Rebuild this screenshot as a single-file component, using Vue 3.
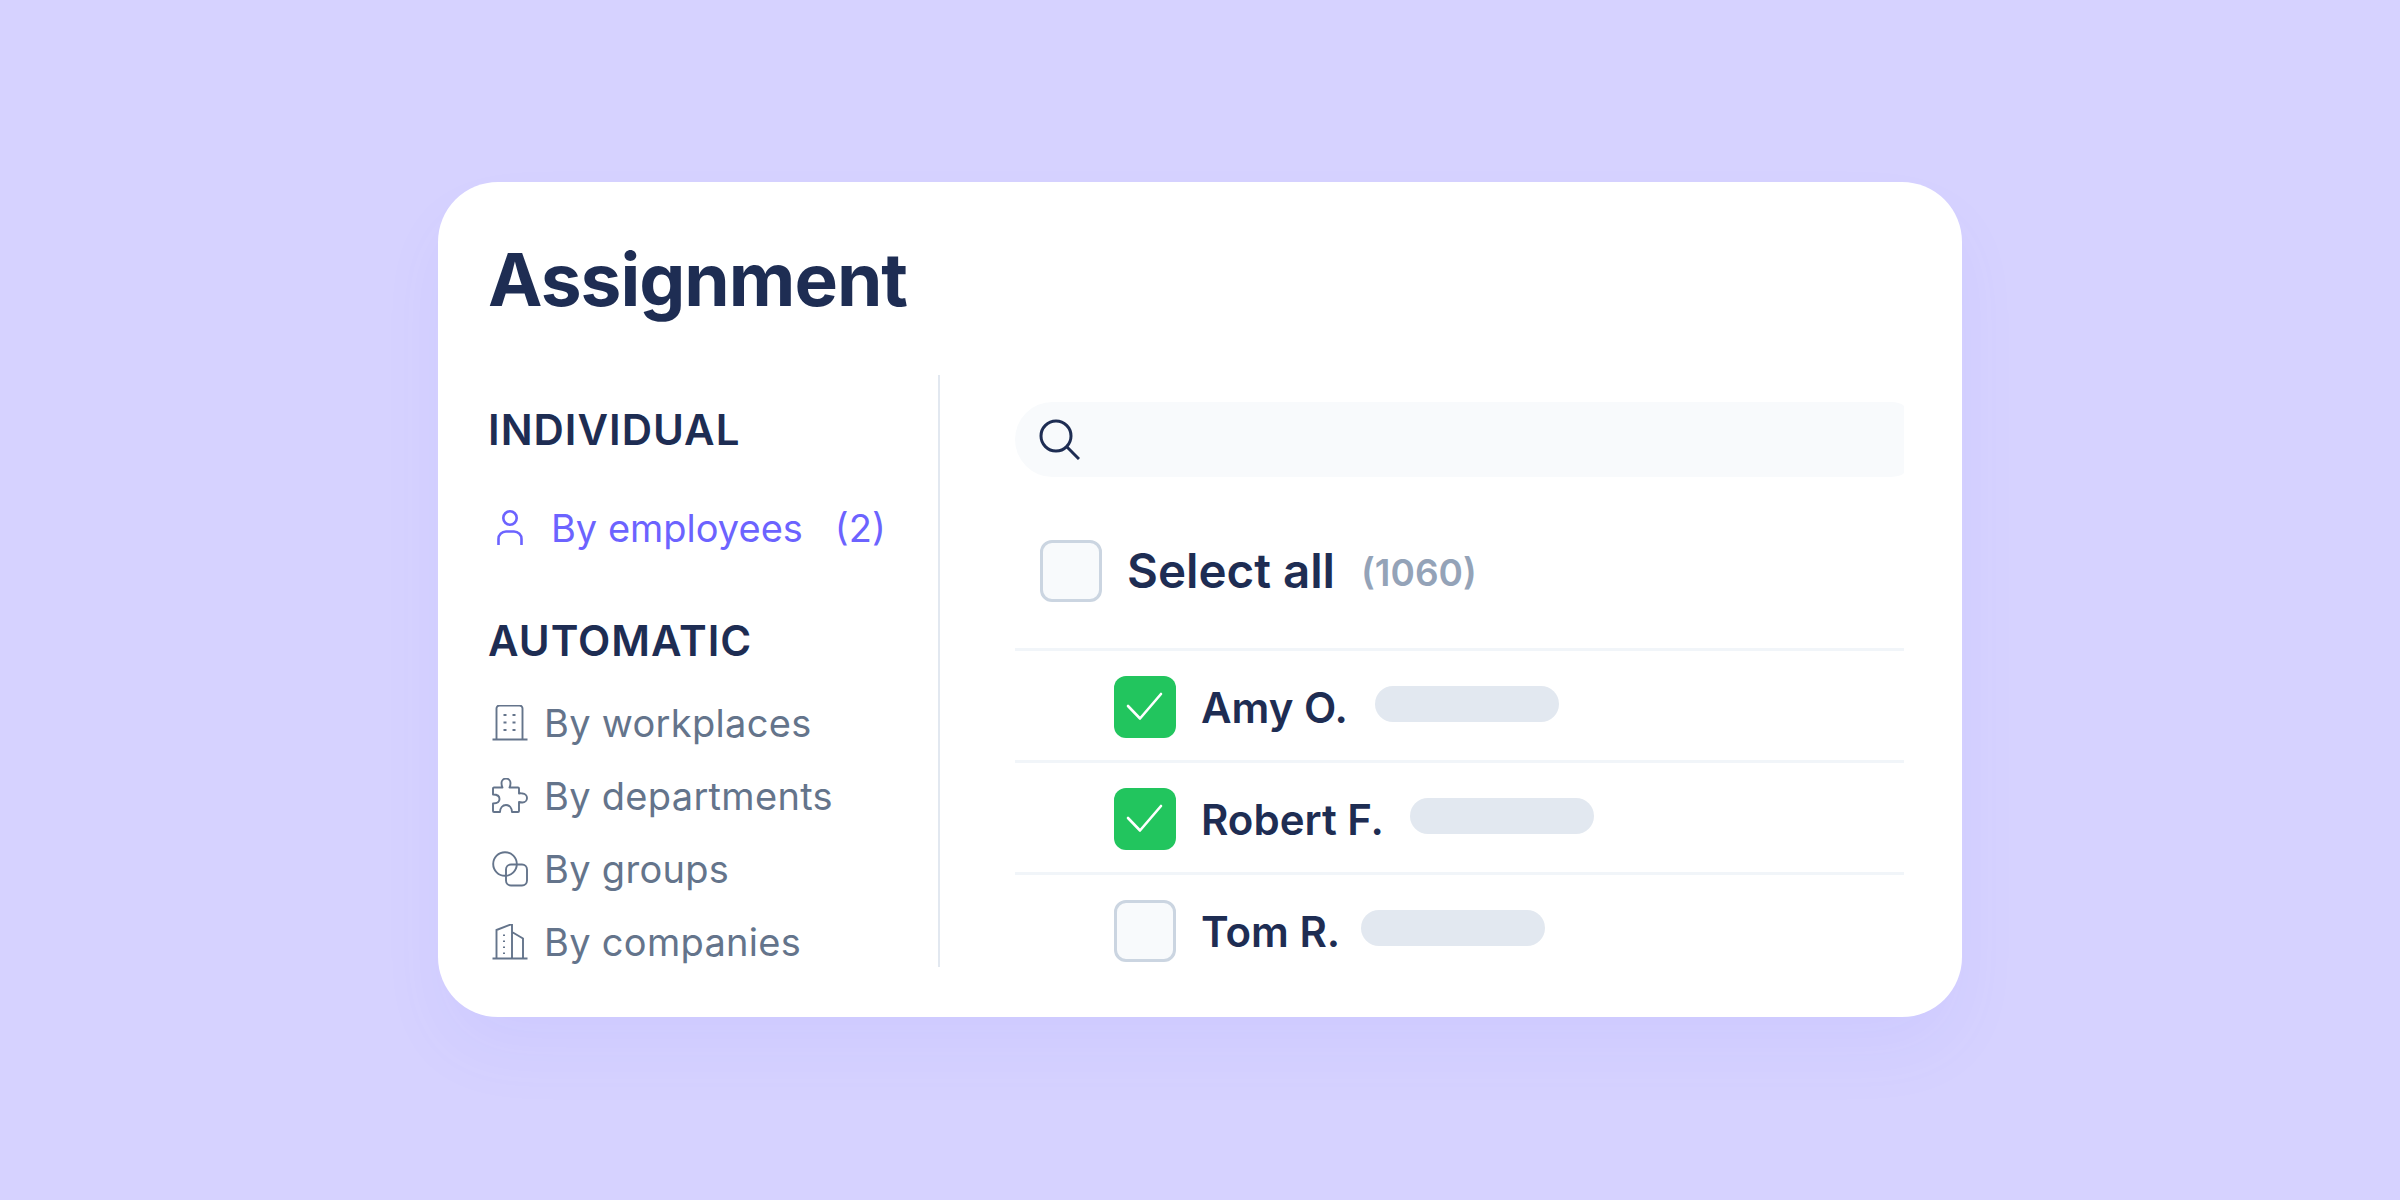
<template>
  <div class="page">
    <div class="card">
      <h1 class="title">Assignment</h1>
      <div class="body">
        <div class="side">
          <div class="side-head">INDIVIDUAL</div>
          <div class="by-employees">
            <svg class="person" viewBox="0 0 26 36" fill="none" stroke="#6c63ff" stroke-width="2.6">
              <circle cx="13" cy="8" r="6.7" />
              <path d="M1.5 35V29a7.5 7.5 0 0 1 7.5-7.5h8a7.5 7.5 0 0 1 7.5 7.5v6" />
            </svg>
            <span class="emp-text">By employees</span>
            <span class="emp-count">(2)</span>
          </div>
          <div class="side-head auto">AUTOMATIC</div>
          <div class="side-list">
            <div class="side-item">
              <svg class="ico" viewBox="0 0 36 36" fill="none" stroke="#64748b" stroke-width="1.9">
                <path d="M4.500 34.500V3.500a3 3 0 0 1 3-3h20a3 3 0 0 1 3 3v31M0.500 34.500h35" />
                <path d="M11.500 10h3M20.500 10h3M11.500 17.500h3M20.500 17.500h3M11.500 25h3M20.500 25h3" />
              </svg>
              <span>By workplaces</span>
            </div>
            <div class="side-item">
              <svg class="ico" viewBox="0 0 36 36" fill="none" stroke="#64748b" stroke-width="1.9" stroke-linejoin="round">
                <path d="M2 9.500H10.500C9.500 8 9.500 6.500 9.500 5a4.500 4.500 0 0 1 9 0C18.500 6.500 18.500 8 17.500 9.500H26a1 1 0 0 1 1 1V15.500C28.500 15 29.500 15.500 30.500 15.500a4.500 4.500 0 0 1 0 9C29.500 24.500 28.500 24.500 27 24V33a1 1 0 0 1-1 1H20C20 30 17.500 27 14 27S8 30 8 34H2a1 1 0 0 1-1-1V25.500C4.500 25.500 7.500 24 7.500 21S4.500 16.500 1 16.500V10.500a1 1 0 0 1 1-1z" />
              </svg>
              <span>By departments</span>
            </div>
            <div class="side-item">
              <svg class="ico" viewBox="0 0 36 36" fill="none" stroke="#64748b" stroke-width="1.9">
                <circle cx="13" cy="13" r="11.800" />
                <rect x="14" y="13.500" width="21" height="21" rx="5" />
              </svg>
              <span>By groups</span>
            </div>
            <div class="side-item">
              <svg class="ico" viewBox="0 0 36 36" fill="none" stroke="#64748b" stroke-width="1.9">
                <path d="M4.500 34.500V6L20 0v34.500M20 8l11 6.500v20M0.500 34.500h35" />
                <path d="M12 10.500v1.500M12 16.500v1.500M12 22.500v1.500M12 28.500v1.500" stroke-width="2" />
              </svg>
              <span>By companies</span>
            </div>
          </div>
        </div>
        <div class="main">
          <div class="search">
            <svg class="search-ico" viewBox="0 0 41 41" fill="none" stroke="#1e2d53" stroke-width="3">
              <circle cx="17" cy="17" r="15" />
              <path d="M28 28l12 12" />
            </svg>
          </div>
          <div class="select-all">
            <span class="box"></span>
            <span class="select-text">Select all</span>
            <span class="select-count">(1060)</span>
          </div>
          <div v-for="p in people" :key="p.name" class="row">
            <span class="box" :class="{ on: p.checked }">
              <svg v-if="p.checked" viewBox="0 0 62 62" fill="none" stroke="#fff" stroke-width="2.600" stroke-linecap="round" stroke-linejoin="round">
                <path d="M14 30l12 12.500L47 18" />
              </svg>
            </span>
            <span class="name">{{ p.name }}</span>
            <span class="pill" :style="{ marginLeft: p.gap + 'px' }"></span>
          </div>
        </div>
      </div>
    </div>
  </div>
</template>

<script setup>
const people = [
  { name: 'Amy O.', checked: true, gap: 27 },
  { name: 'Robert F.', checked: true, gap: 26 },
  { name: 'Tom R.', checked: false, gap: 21 }
]
</script>

<style>
body {
  background: #d6d2ff;
}
</style>

<style scoped>
.page {
  box-sizing: border-box;
  height: 1200px;
  padding-top: 182px;
  display: flex;
  justify-content: center;
  background: #d6d2ff;
  font-family: Inter, "Liberation Sans", sans-serif;
}
.card {
  box-sizing: border-box;
  width: 1524px;
  height: 835px;
  padding: 50px 58px 50px 50px;
  background: #fff;
  border-radius: 60px;
  box-shadow: 0 36px 70px -10px rgba(108, 99, 255, 0.08);
  display: flex;
  flex-direction: column;
}
.title {
  margin: 0;
  flex: none;
  height: 143px;
  padding-top: 4px;
  box-sizing: border-box;
  font-size: 73px;
  line-height: 88px;
  font-weight: 700;
  color: #1e2d53;
  letter-spacing: -1px;
}
.body {
  flex: 1;
  min-height: 0;
  display: flex;
}
.side {
  box-sizing: border-box;
  width: 452px;
  border-right: 2px solid #e2e8f0;
  padding-top: 30px;
}
.side-head {
  font-size: 42px;
  line-height: 50px;
  font-weight: 600;
  color: #1e2d53;
  letter-spacing: 1px;
}
.side-head.auto {
  margin-top: 63px;
}
.by-employees {
  display: flex;
  align-items: center;
  margin-top: 48px;
  padding-left: 9px;
  font-size: 38px;
  line-height: 50px;
  color: #6c63ff;
}
.person {
  width: 26px;
  height: 36px;
  margin-right: 28px;
}
.emp-count {
  margin-left: 32px;
}
.side-list {
  margin-top: 20px;
}
.side-item {
  display: flex;
  align-items: center;
  height: 73px;
  padding-left: 4px;
  font-size: 38px;
  letter-spacing: 0.3px;
  color: #64748b;
}
.ico {
  width: 36px;
  height: 36px;
  margin-right: 16px;
  flex: none;
}
.main {
  flex: 1;
  padding: 27px 0 0 75px;
}
.search {
  height: 75px;
  border-radius: 38px 14px 14px 38px / 38px 5px 5px 38px;
  background: #f8fafc;
  display: flex;
  align-items: center;
  padding-left: 24px;
}
.search-ico {
  width: 41px;
  height: 41px;
}
.select-all {
  display: flex;
  align-items: center;
  height: 174px;
  padding: 16px 0 0 25px;
  border-bottom: 3px solid #f1f5f9;
  box-sizing: border-box;
}
.box {
  box-sizing: border-box;
  width: 62px;
  height: 62px;
  flex: none;
  border: 3px solid #cbd5e1;
  border-radius: 12px;
  background: #f8fafc;
}
.box.on {
  border: 0;
  background: #22c55e;
}
.box svg {
  display: block;
}
.select-text {
  margin-left: 25px;
  font-size: 47.500px;
  font-weight: 600;
  color: #1e2d53;
}
.select-count {
  margin: 3px 0 0 26px;
  font-size: 37px;
  font-weight: 600;
  color: #94a3b8;
}
.row {
  box-sizing: border-box;
  display: flex;
  align-items: center;
  height: 112px;
  padding: 3px 0 0 99px;
  border-bottom: 3px solid #f1f5f9;
}
.row:last-child {
  padding-top: 0;
  border-bottom: 0;
}
.name {
  margin-left: 25px;
  font-size: 42px;
  font-weight: 600;
  color: #1e2d53;
}
.pill {
  width: 184px;
  height: 36px;
  margin-bottom: 6px;
  border-radius: 18px;
  background: #e2e8f0;
}
</style>
